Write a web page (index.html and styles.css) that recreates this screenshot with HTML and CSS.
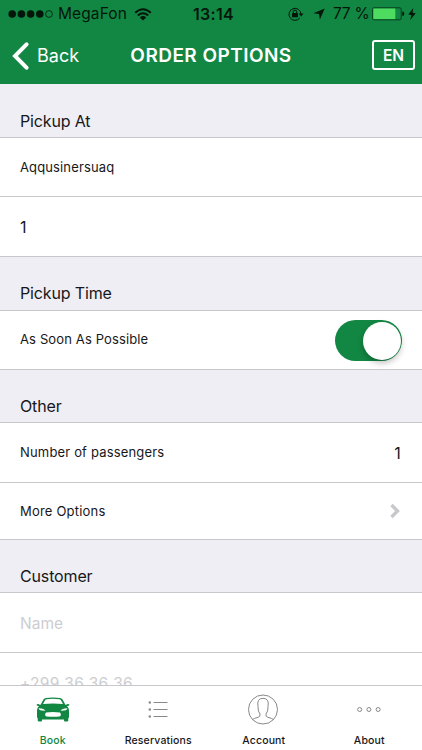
FILE: index.html
```html
<!DOCTYPE html>
<html lang="en">
<head>
<meta charset="utf-8">
<title>Order Options</title>
<link rel="stylesheet" href="styles.css">
</head>
<body>
<div class="app">
  <header class="header">
    <div class="status">
      <div class="carrier">
        <svg class="signal" width="46" height="10" viewBox="0 0 46 10"><circle cx="4.2" cy="5" r="3.8"/><circle cx="13.4" cy="5" r="3.8"/><circle cx="22.6" cy="5" r="3.8"/><circle cx="31.8" cy="5" r="3.8"/><circle class="empty" cx="41" cy="5" r="3.4"/></svg>
        <span class="carrier-name">MegaFon</span>
        <svg class="wifi" width="18" height="13" viewBox="0 0 18 13"><path d="M1.2 4.8Q9-2.2 16.8 4.8M3.8 7.5Q9 3.1 14.2 7.5"/><path class="solid" d="M9 12.5 5.8 9.4Q9 6.8 12.2 9.4Z"/></svg>
      </div>
      <span class="clock">13:14</span>
      <div class="power">
        <svg class="lock" width="16" height="14" viewBox="0 0 16 14"><path class="ring" d="M11.7 11.1A6 6 0 1 1 13 7"/><path d="M10.7 6.5h4.8L13.1 9.5Z"/><rect x="4" y="6" width="6" height="4.3" rx=".5"/><path class="ring" d="M5.3 6V4.8a1.7 1.7 0 0 1 3.4 0V6"/></svg>
        <svg class="arrow" width="12" height="12" viewBox="0 0 12 12"><path d="M11.7.4 6.9 11.6 6 6 .4 5.2Z"/></svg>
        <span class="percent">77 %</span>
        <svg class="battery" width="33" height="14" viewBox="0 0 33 14"><rect class="case" x=".6" y=".8" width="28.6" height="12" rx="1.5"/><rect class="charge" x="1.3" y="1.5" width="22" height="10.6"/><path d="M30.3 4.5q2 0 2 2.3t-2 2.3Z"/></svg>
        <svg class="bolt" width="8" height="12" viewBox="0 0 8 12"><path d="M5.3 0 .3 6.5 3.5 7.1 2.2 12 7.7 5.3 4.5 4.8Z"/></svg>
      </div>
    </div>
    <nav class="navbar">
      <div class="back"><svg width="17" height="28" viewBox="0 0 17 28"><path d="M14.5 2.3 3 14 14.5 25.7"/></svg><span>Back</span></div>
      <h1 class="title">ORDER OPTIONS</h1>
      <div class="language">EN</div>
    </nav>
  </header>
  <main class="form">
    <h2 class="section first">Pickup At</h2>
    <div class="row"><span>Aqqusinersuaq</span></div>
    <div class="row tall"><span class="value">1</span></div>
    <h2 class="section">Pickup Time</h2>
    <div class="row"><span class="label">As Soon As Possible</span><span class="switch"><span class="knob"></span></span></div>
    <h2 class="section compact">Other</h2>
    <div class="row tall"><span class="label wide">Number of passengers</span><span class="value count">1</span></div>
    <div class="row more"><span>More Options</span><svg class="chevron" width="12" height="16" viewBox="0 0 12 16"><path d="M2.5 2 8.5 8 2.5 14"/></svg></div>
    <h2 class="section compact">Customer</h2>
    <div class="row tall placeholder">Name</div>
    <div class="row placeholder phone">+299 36 36 36</div>
  </main>
  <footer class="tabs">
    <div class="tab active">
      <svg width="34" height="48" viewBox="0 0 34 48"><path fill-rule="evenodd" d="M5 18 7.4 13.6Q8.2 12.2 10 12 17 11.2 24 12 25.8 12.2 26.6 13.6L29 18 30 19.2Q30.5 17.8 33 18.2 34.4 19.7 31 20 33.2 22 33 25V31Q33 32 32.3 32V34.5Q32.3 35.5 31 35.5H29Q28 35.5 28 34.5V33.4H6V34.5Q6 35.5 5 35.5H3Q1.7 35.5 1.7 34.5V32Q1 32 1 31V25Q.8 22 3 20-.4 19.7 1 18.2 3.5 17.8 4 19.2ZM7 18Q17 16.8 27 18L24.8 14Q24.4 13.3 23.5 13.2 17 12.4 10.5 13.2 9.6 13.3 9.2 14ZM2.5 22.3Q3 25 9.3 24.8 8.2 22.2 2.5 22.3ZM31.5 22.3Q25.8 22.2 24.7 24.8 31 25 31.5 22.3ZM10 26.4Q8 29.4 10.4 30.4 17 31.3 23.6 30.4 26 29.4 24 26.4 17 25.4 10 26.4Z"/></svg>
      <span>Book</span>
    </div>
    <div class="tab">
      <svg width="20" height="48" viewBox="0 .5 20 48"><path class="line" d="M5.5 17H19.5M5.5 24H19.5M5.5 31H19.5"/><circle cx="1.8" cy="17" r="1.2"/><circle cx="1.8" cy="24" r="1.2"/><circle cx="1.8" cy="31" r="1.2"/></svg>
      <span>Reservations</span>
    </div>
    <div class="tab">
      <svg class="person" width="32" height="48" viewBox="0 .5 32 48"><circle class="line" cx="16" cy="24" r="14.5"/><path class="line" d="M5.5 34Q7 32.8 11.2 31.8 13.6 31.2 13 28.5 10.8 26 11 21 9.5 12.8 16 12.8 22.5 12.8 21 21 21.2 26 19 28.5 18.4 31.2 20.8 31.8 25 32.8 26.5 34"/></svg>
      <span>Account</span>
    </div>
    <div class="tab">
      <svg width="26" height="48" viewBox="0 .5 26 48"><circle class="line" cx="3.7" cy="24" r="2"/><circle class="line" cx="12.9" cy="24" r="2"/><circle class="line" cx="22.1" cy="24" r="2"/></svg>
      <span>About</span>
    </div>
  </footer>
</div>
</body>
</html>
```
FILE: styles.css
```css
* { box-sizing: border-box; }
body { margin: 0; font-family: Inter, "Liberation Sans", sans-serif; color: #17171a; }
svg { display: block; flex: none; }
.app { display: flex; flex-direction: column; width: 422px; height: 750px; overflow: hidden; background: #fff; }
.header { height: 84px; flex: none; background: #128743; }
.status { height: 28px; display: grid; grid-template-columns: 1fr auto 1fr; align-items: center; padding: 0 6px 0 8px; color: #04160a; font-size: 15.5px; line-height: 28px; }
.status svg { fill: #04160a; }
.carrier, .power { display: flex; align-items: center; }
.power { justify-content: flex-end; }
.carrier-name { width: 69px; margin-left: 4px; letter-spacing: .1px; }
.signal .empty { fill: none; stroke: #04160a; stroke-width: .8; }
.wifi { margin-left: 7px; }
.status .wifi { fill: none; stroke: #04160a; stroke-width: 2; }
.wifi .solid { fill: #04160a; stroke: none; }
.clock { margin-left: 3px; font-size: 16px; font-weight: 600; letter-spacing: .3px; }
.status .ring { fill: none; stroke: #04160a; stroke-width: 1; }
.arrow { margin-left: 9px; }
.percent { margin-left: 8px; width: 36px; white-space: nowrap; letter-spacing: -.2px; }
.battery { margin-left: 3px; }
.status .case { fill: none; stroke: #073d1d; stroke-width: 1; }
.status .charge { fill: #4edc60; }
.bolt { margin-left: 3px; }
.navbar { height: 55px; display: grid; grid-template-columns: 1fr auto 1fr; align-items: center; padding: 0 7px; color: #fff; }
.back { display: flex; align-items: center; gap: 8px; margin-left: 5px; font-size: 18px; }
.back path { fill: none; stroke: #fff; stroke-width: 4; stroke-linecap: round; }
.title { margin: 0; font-size: 19px; font-weight: 600; line-height: 24px; letter-spacing: .45px; }
.language { justify-self: end; width: 43px; height: 30px; margin-bottom: 1px; border: 2px solid #fff; border-radius: 3px; font-size: 15.5px; font-weight: 600; line-height: 27px; text-align: center; }
.form { flex: 1; min-height: 0; overflow: hidden; }
.section { margin: 0; height: 54px; padding: 15px 20px 0; background: #efeef5; font-size: 16px; font-weight: 400; line-height: 43px; letter-spacing: -.15px; border-bottom: 1px solid #c8c7cc; }
.first { line-height: 44px; }
.compact { height: 53px; line-height: 42px; }
.row { display: flex; align-items: center; justify-content: space-between; height: 59px; padding: 0 20px; font-size: 13px; letter-spacing: .13px; white-space: nowrap; border-bottom: 1px solid #c8c7cc; }
.tall { height: 60px; }
.more { height: 57px; letter-spacing: .2px; }
.label { padding-bottom: 2px; }
.wide { letter-spacing: .17px; }
.value { font-size: 16px; }
.count { margin-right: 1px; }
.switch { display: flex; justify-content: flex-end; width: 67px; height: 41px; margin-top: 1px; padding: 2px 1px; border-radius: 21px; background: #128743; }
.knob { width: 38px; height: 38px; border-radius: 50%; background: #fff; box-shadow: 0 3px 6px rgba(0,0,0,.25); }
.chevron { margin-right: 1px; }
.chevron path { fill: none; stroke: #c7c7cc; stroke-width: 3.4; }
.placeholder { padding-top: 2px; color: #cdcdd1; font-size: 15.5px; letter-spacing: 0; }
.phone { letter-spacing: .3px; }
.tabs { flex: none; height: 65px; display: grid; grid-template-columns: repeat(4, 1fr); border-top: 1px solid #c8c7cc; background: #fff; }
.tab { display: flex; flex-direction: column; align-items: center; font-size: 10.5px; font-weight: 500; line-height: 14px; letter-spacing: .15px; }
.tab svg { fill: #888; }
.tab .line { fill: none; stroke: #888; stroke-width: 1; }
.tab .person { margin-left: -2px; }
.active { color: #128743; }
.active svg { fill: #128743; }
```
